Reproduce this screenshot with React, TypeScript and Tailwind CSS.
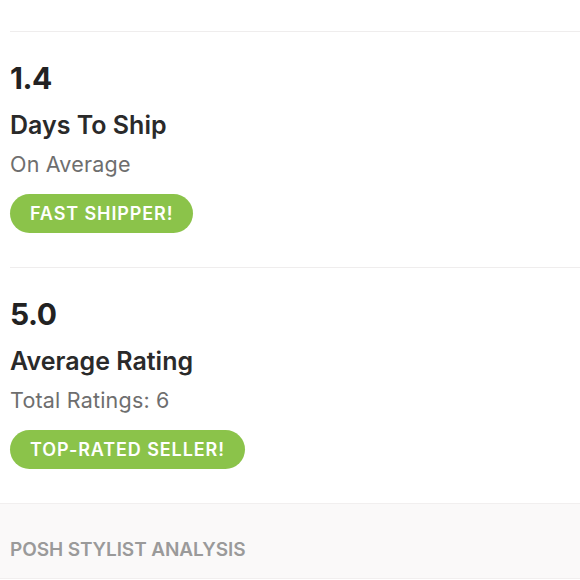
import React from "react";

function Stat({ value, title, sub, badge }: { value: string; title: string; sub: string; badge: string }) {
  return (
    <div className="px-[10px] pt-[28px] pb-[34px]">
      <div className="text-[30px] leading-[36px] font-bold tracking-[-0.5px] text-[#222]">{value}</div>
      <div className="mt-[14px] text-[25px] leading-[30px] font-semibold text-[#2a2a2a]">{title}</div>
      <div className="mt-[11px] text-[21.5px] leading-[26px] tracking-[0.2px] text-[#6e6e6e]">{sub}</div>
      <div className="mt-[17px] flex">
        <div className="h-[39px] rounded-full bg-[#8bc34a] px-[20px] flex items-center text-[18px] font-semibold tracking-[0.9px] text-white">
          {badge}
        </div>
      </div>
    </div>
  );
}

export default function App() {
  return (
    <div className="w-[580px] h-[580px] bg-white overflow-hidden font-['Inter',sans-serif]">
      <div className="h-[31px]" />
      <div className="ml-[10px] h-px bg-[#efeded]" />
      <Stat value="1.4" title="Days To Ship" sub="On Average" badge="FAST SHIPPER!" />
      <div className="ml-[10px] h-px bg-[#efeded]" />
      <Stat value="5.0" title="Average Rating" sub="Total Ratings: 6" badge="TOP-RATED SELLER!" />
      <div className="border-t border-b border-[#f1efef] bg-[#faf9f9] h-[76px] px-[10px] pt-[34px]">
        <div className="text-[19px] leading-[24px] font-semibold tracking-[-0.1px] text-[#9a9a9a]">POSH STYLIST ANALYSIS</div>
      </div>
    </div>
  );
}
